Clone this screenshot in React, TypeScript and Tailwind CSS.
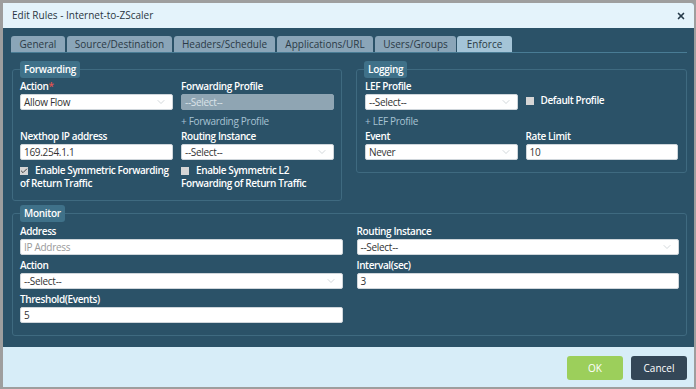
import { X, ChevronDown, Check } from 'lucide-react';

const tabs = [
  { label: 'General', w: 'w-[54px]' },
  { label: 'Source/Destination', w: 'w-[105px]' },
  { label: 'Headers/Schedule', w: 'w-[101px]' },
  { label: 'Applications/URL', w: 'w-[96px]' },
  { label: 'Users/Groups', w: 'w-[81px]' },
];

function Label({ children, req }: { children: React.ReactNode; req?: boolean }) {
  return (
    <div className="h-[15px] text-[10px] font-semibold leading-[15px] tracking-[-0.4px] text-white">
      {children}
      {req && <span className="text-[#e2534f]">*</span>}
    </div>
  );
}

function Select({ value, disabled }: { value: string; disabled?: boolean }) {
  return (
    <div
      className={`flex h-4 items-center justify-between rounded-[2px] border pl-[3px] pr-[5px] text-[10px] tracking-[-0.3px] ${
        disabled ? 'border-[#8fa5b3] bg-[#8fa5b3] text-[#dbe3e9]' : 'border-[#cfd6db] bg-white text-[#333]'
      }`}
    >
      <span>{value}</span>
      {!disabled && <ChevronDown className="h-3 w-3 text-[#b9c0c6]" strokeWidth={1.25} />}
    </div>
  );
}

function Input({ value, placeholder }: { value?: string; placeholder?: string }) {
  return (
    <div className="flex h-4 items-center rounded-[2px] border border-[#cfd6db] bg-white pl-[3px] text-[10px] tracking-[-0.3px]">
      {value ? <span className="text-[#333]">{value}</span> : <span className="text-[#9a9a9a]">{placeholder}</span>}
    </div>
  );
}

function Box({ checked }: { checked?: boolean }) {
  return (
    <span className="mr-[7px] inline-flex h-2 w-2 items-center justify-center bg-[#d5d5d5] align-[-1px]">
      {checked && <Check className="h-2 w-2 text-[#444]" strokeWidth={3} />}
    </span>
  );
}

function Legend({ children }: { children: React.ReactNode }) {
  return (
    <div className="relative z-10 ml-2 h-[17px] w-fit rounded-[3px] bg-[#3f7189] px-1 text-[10px] font-semibold leading-[17px] tracking-[-0.3px] text-white">
      {children}
    </div>
  );
}

export default function App() {
  return (
    <div className="h-[389px] w-[696px] overflow-hidden bg-[#9e9e9e] pl-[3px] pt-[3px] font-['Open_Sans',sans-serif]">
      <div className="flex h-[384px] w-[691px] flex-col overflow-hidden rounded-tr-[3px] bg-[#2b5268]">
        {/* header */}
        <div className="flex h-[25px] items-center justify-between bg-[#e4f3fb] pl-[9px] pr-[8px]">
          <span className="text-[10px] text-[#2a3642]">Edit Rules - Internet-to-ZScaler</span>
          <X className="h-[10px] w-[10px] text-[#263a4a]" strokeWidth={4} />
        </div>

        {/* tabs */}
        <div className="ml-[8px] mr-[7px] mt-[8px] flex h-[17px] items-end gap-[2px] border-b border-[#497c95]">
          {tabs.map((t) => (
            <div
              key={t.label}
              className={`${t.w} h-[16px] rounded-t-[3px] bg-[#8aa5b8] text-center text-[10px] leading-[16px] text-[#2a3a46]`}
            >
              {t.label}
            </div>
          ))}
          <div className="-ml-[1px] h-[16px] w-[55px] rounded-t-[3px] bg-[#a4c4d7] text-center text-[10px] leading-[16px] text-[#2a3a46]">
            Enforce
          </div>
        </div>

        {/* top fieldsets */}
        <div className="ml-[9px] mr-[7px] mt-[8px] flex items-start gap-[14px]">
          <div className="w-[330px]">
            <Legend>Forwarding</Legend>
            <div className="-mt-[9px] h-[132px] rounded-[3px] border border-[#3f6a80] px-[7px] pt-[9px]">
              <div className="grid grid-cols-2 gap-x-[8px]">
                <div>
                  <Label req>Action</Label>
                  <Select value="Allow Flow" />
                </div>
                <div>
                  <Label>Forwarding Profile</Label>
                  <Select value="--Select--" disabled />
                  <div className="mt-[4px] h-[15px] text-[10px] leading-[15px] tracking-[-0.3px] text-[#a7c2d3]">+ Forwarding Profile</div>
                </div>
                <div>
                  <Label>Nexthop IP address</Label>
                  <Input value="169.254.1.1" />
                </div>
                <div>
                  <Label>Routing Instance</Label>
                  <Select value="--Select--" />
                </div>
                <p className="mt-[4px] text-[10px] font-semibold leading-[13px] tracking-[-0.4px] text-white">
                  <Box checked />
                  Enable Symmetric Forwarding of Return Traffic
                </p>
                <p className="mt-[4px] text-[10px] font-semibold leading-[13px] tracking-[-0.4px] text-white">
                  <Box />
                  Enable Symmetric L2 Forwarding of Return Traffic
                </p>
              </div>
            </div>
          </div>

          <div className="w-[331px]">
            <Legend>Logging</Legend>
            <div className="-mt-[9px] h-[104px] rounded-[3px] border border-[#3f6a80] pl-[8px] pr-[8px] pt-[9px]">
              <div className="grid grid-cols-2 gap-x-[8px]">
                <div>
                  <Label>LEF Profile</Label>
                  <Select value="--Select--" />
                  <div className="mt-[4px] h-[15px] text-[10px] leading-[15px] tracking-[-0.3px] text-[#a7c2d3]">+ LEF Profile</div>
                </div>
                <p className="pt-[14px] text-[10px] font-semibold leading-[15px] tracking-[-0.4px] text-white">
                  <Box />
                  Default Profile
                </p>
                <div>
                  <Label>Event</Label>
                  <Select value="Never" />
                </div>
                <div>
                  <Label>Rate Limit</Label>
                  <Input value="10" />
                </div>
              </div>
            </div>
          </div>
        </div>

        {/* monitor */}
        <div className="ml-[9px] mr-[7px] mt-[4px]">
          <Legend>Monitor</Legend>
          <div className="-mt-[9px] h-[123px] rounded-[3px] border border-[#3f6a80] px-[7px] pt-[10px]">
            <div className="grid grid-cols-2 gap-x-[14px] gap-y-[3px]">
              <div>
                <Label>Address</Label>
                <Input placeholder="IP Address" />
              </div>
              <div>
                <Label>Routing Instance</Label>
                <Select value="--Select--" />
              </div>
              <div>
                <Label>Action</Label>
                <Select value="--Select--" />
              </div>
              <div>
                <Label>Interval(sec)</Label>
                <Input value="3" />
              </div>
              <div>
                <Label>Threshold(Events)</Label>
                <Input value="5" />
              </div>
            </div>
          </div>
        </div>

        {/* footer */}
        <div className="mt-auto flex h-[40px] items-start justify-end gap-[8px] bg-[#d7edf8] pr-[7px] pt-[9px]">
          <button className="h-[24px] w-[56px] rounded-[3px] bg-[#9ccf5b] text-[10px] text-white">OK</button>
          <button className="h-[24px] w-[56px] rounded-[3px] bg-[#344757] text-[10px] text-white">Cancel</button>
        </div>
      </div>
    </div>
  );
}
